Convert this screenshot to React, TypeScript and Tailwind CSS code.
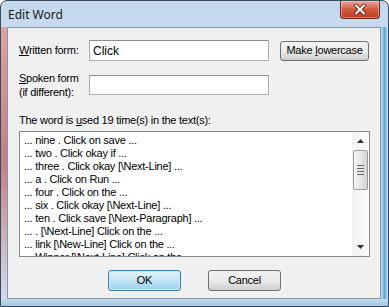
import React from "react";

const lines = [
  "... nine . Click on save ...",
  "... two . Click okay if ...",
  "... three . Click okay [\\Next-Line] ...",
  "... a . Click on Run ...",
  "... four . Click on the ...",
  "... six . Click okay [\\Next-Line] ...",
  "... ten . Click save [\\Next-Paragraph] ...",
  "... . [\\Next-Line] Click on the ...",
  "... link [\\New-Line] Click on the ...",
  "... Winner [\\Next-Line] Click on the ...",
];

const font = { fontFamily: '"Liberation Sans", Arial, sans-serif' };

export default function App() {
  return (
    <div
      className="w-[389px] h-[307px] flex flex-col rounded-t-[7px] border border-[#3b4a5a] bg-gradient-to-b from-[#c4d8ee] via-[#d3e3f3] to-[#c9ddf0] text-[11px] text-black overflow-hidden"
      style={font}
    >
      {/* Title bar */}
      <div className="h-[26px] flex items-start justify-between shrink-0">
        <div
          className="pl-[7px] pt-[5px] text-[12px] text-[#1a1a1a]"
          style={{ fontFamily: '"Noto Sans", "Open Sans", sans-serif' }}
        >
          Edit Word
        </div>
        <div className="mr-[8px] w-[40px] h-[18px] rounded-b-[4px] border border-[#6b2a1f] border-t-0 bg-gradient-to-b from-[#e9a696] via-[#cf5a40] to-[#c0391e] flex items-center justify-center shadow-[inset_0_0_0_1px_rgba(255,255,255,0.35)]">
          <svg width="12" height="11" viewBox="0 0 12 11">
            <path
              d="M2 1.5 L10 9.5 M10 1.5 L2 9.5"
              stroke="#5a1a10"
              strokeWidth="3.6"
              strokeLinecap="round"
            />
            <path
              d="M2 1.5 L10 9.5 M10 1.5 L2 9.5"
              stroke="#ffffff"
              strokeWidth="2"
              strokeLinecap="round"
            />
          </svg>
        </div>
      </div>

      {/* Middle */}
      <div className="flex flex-1">
        <div className="w-[6px] bg-gradient-to-b from-[#dca3a3] via-[#c47f84] to-[#cfdcec]" />
        <div className="w-[374px] h-[272px] bg-[#f0f0f0] border border-[#8196ab] flex flex-col pl-[11px] pt-[12px] tracking-[-0.25px]">
          {/* Row 1 */}
          <div className="flex items-center h-[21px]">
            <div className="w-[70px]">
              <span className="underline">W</span>ritten form:
            </div>
            <div className="w-[180px] h-[21px] bg-white border border-[#abadb3] border-t-[#8e8f8f] flex items-center pl-[3px] text-[12px] tracking-normal">
              Click
            </div>
            <div className="ml-[11px] w-[89px] h-[20px] rounded-[3px] border border-[#707070] bg-gradient-to-b from-[#f2f2f2] via-[#ebebeb] to-[#cfcfcf] flex items-center justify-center">
              Make <span className="underline ml-[3px]">l</span>owercase
            </div>
          </div>

          {/* Row 2 */}
          <div className="flex mt-[14px]">
            <div className="w-[70px] leading-[14px] mt-[-4px]">
              <div>
                <span className="underline">S</span>poken form
              </div>
              <div>(if different):</div>
            </div>
            <div className="w-[180px] h-[20px] bg-white border border-[#abadb3] border-t-[#8e8f8f]" />
          </div>

          <div className="mt-[14px] leading-[14px]">
            The word is <span className="underline">u</span>sed 19 time(s) in the text(s):
          </div>

          {/* List */}
          <div className="mt-[4px] w-[351px] h-[126px] bg-white border border-[#828790] flex overflow-hidden">
            <div className="flex-1 pl-[4px] pt-[2px] overflow-hidden">
              {lines.map((l) => (
                <div key={l} className="h-[13px] leading-[13px] whitespace-nowrap">
                  {l}
                </div>
              ))}
            </div>
            <div className="w-[17px] h-full bg-gradient-to-r from-[#f3f3f3] to-[#fbfbfb] flex flex-col items-center">
              <div className="h-[18px] flex items-center justify-center">
                <svg width="7" height="4" viewBox="0 0 7 4">
                  <path d="M0 4 L3.5 0 L7 4 Z" fill="#333" />
                </svg>
              </div>
              <div className="w-[15px] h-[40px] rounded-[2px] border border-[#9a9a9a] bg-gradient-to-r from-[#f4f4f4] via-[#e6e6e6] to-[#d4d4d4] flex flex-col items-center justify-center gap-[2px]">
                <div className="w-[7px] h-[1px] bg-[#666]" />
                <div className="w-[7px] h-[1px] bg-[#666]" />
                <div className="w-[7px] h-[1px] bg-[#666]" />
                <div className="w-[7px] h-[1px] bg-[#666]" />
              </div>
              <div className="flex-1" />
              <div className="h-[18px] flex items-center justify-center">
                <svg width="7" height="4" viewBox="0 0 7 4">
                  <path d="M0 0 L3.5 4 L7 0 Z" fill="#333" />
                </svg>
              </div>
            </div>
          </div>

          {/* Buttons */}
          <div className="flex mt-[13px] ml-[89px] gap-[27px]">
            <div className="w-[73px] h-[21px] rounded-[3px] border border-[#3c7fb1] bg-gradient-to-b from-[#e5f4fc] via-[#c4e5f6] to-[#98d1ef] shadow-[inset_0_0_0_1px_#c8ecfc] flex items-center justify-center">
              OK
            </div>
            <div className="w-[73px] h-[21px] rounded-[3px] border border-[#707070] bg-gradient-to-b from-[#f2f2f2] via-[#ebebeb] to-[#cfcfcf] flex items-center justify-center">
              Cancel
            </div>
          </div>
        </div>
        <div className="flex-1 bg-gradient-to-r from-[#cfdff0] via-[#5aa6d6] to-[#cfe0f0]" />
      </div>
      <div className="h-[7px] bg-gradient-to-b from-[#c6daee] to-[#9fc6e6]" />
    </div>
  );
}
